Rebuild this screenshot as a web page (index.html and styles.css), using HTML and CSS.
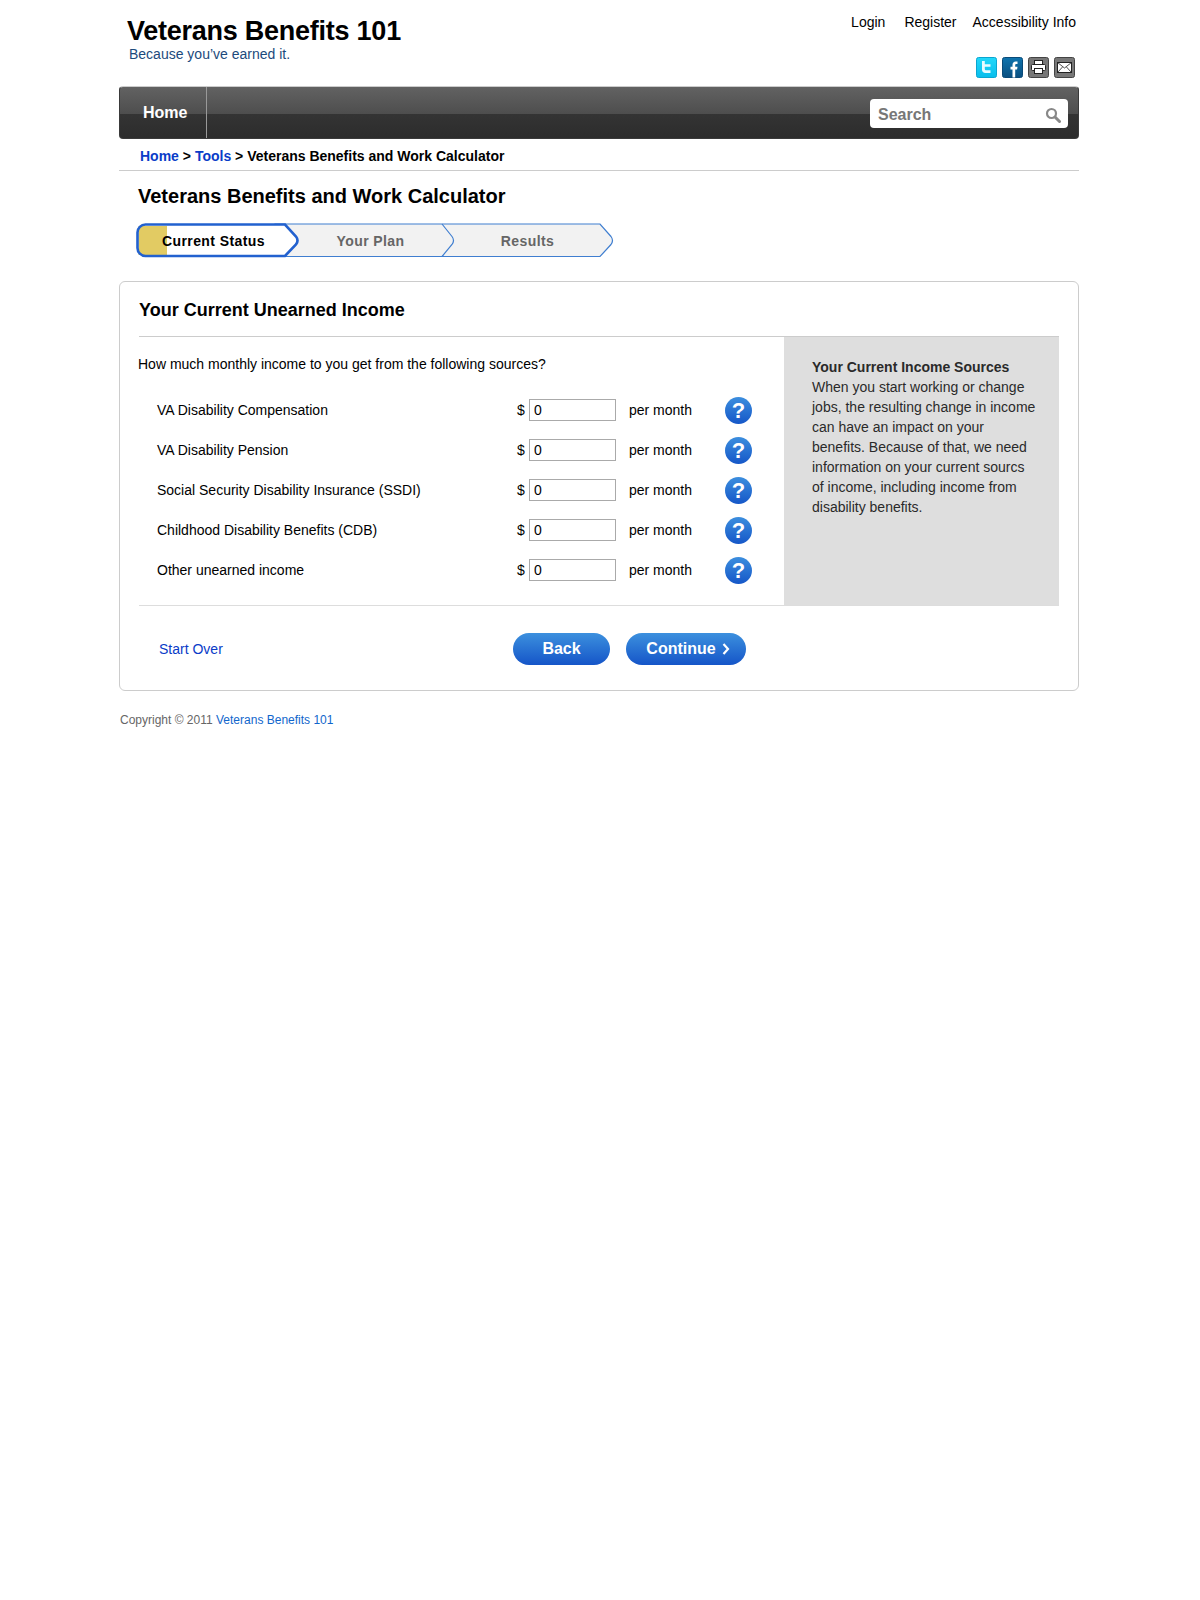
FILE: index.html
```html
<!DOCTYPE html>
<html lang="en">
<head>
    <meta charset="UTF-8">
    <title>Veterans Benefits and Work Calculator</title>
    <link rel="stylesheet" href="styles.css">
</head>
<body>

<div class="page">
    <header class="top">
        <div class="brand">
            <div class="brand-name">Veterans Benefits 101</div>
            <div class="brand-tag">Because you’ve earned it.</div>
        </div>
        <div class="top-right">
            <div class="top-links">
                <a href="#">Login</a>
                <a href="#">Register</a>
                <a href="#">Accessibility Info</a>
            </div>
            <div class="share">
                <svg class="share-icon" width="21" height="21" viewBox="0 0 21 21">
                    <defs>
                        <linearGradient id="tw" x1="0" y1="0" x2="0" y2="1">
                            <stop offset="0" stop-color="#22d8fa"/>
                            <stop offset="1" stop-color="#07bdec"/>
                        </linearGradient>
                        <linearGradient id="fb" x1="0" y1="0" x2="0" y2="1">
                            <stop offset="0" stop-color="#0f74ae"/>
                            <stop offset="1" stop-color="#0a4f80"/>
                        </linearGradient>
                    </defs>
                    <rect x="0.5" y="0.5" width="20" height="20" rx="2" fill="url(#tw)" stroke="#0aa5d0"/>
                    <path d="M6 4h2.800v3.200h5.700v2.600H8.800v1.900c0 1 .5 1.500 1.500 1.500h4.200v2.800h-5C7.200 16 6 14.800 6 12.800z" fill="#e8fbff"/>
                </svg>
                <svg class="share-icon" width="21" height="21" viewBox="0 0 21 21">
                    <rect x="0.5" y="0.5" width="20" height="20" rx="2" fill="url(#fb)" stroke="#0a4a78"/>
                    <path d="M10.500 20.500V12.500H8.500V9.800h2V8c0-2.300 1.200-3.500 3.300-3.500h1.700v2.600h-1.100c-.9 0-1.200.4-1.200 1.200v1.500h2.300l-.4 2.700h-1.900v8z" fill="#fff"/>
                </svg>
                <svg class="share-icon" width="21" height="21" viewBox="0 0 21 21">
                    <rect x="0.5" y="0.5" width="20" height="20" rx="2" fill="#777" stroke="#444"/>
                    <rect x="6.500" y="3.500" width="8" height="4" fill="#fff" stroke="#222"/>
                    <rect x="3.500" y="7.500" width="14" height="6" rx="1" fill="#fff" stroke="#222"/>
                    <rect x="6.500" y="11.500" width="8" height="5" fill="#fff" stroke="#222"/>
                </svg>
                <svg class="share-icon" width="21" height="21" viewBox="0 0 21 21">
                    <rect x="0.5" y="0.5" width="20" height="20" rx="2" fill="#777" stroke="#444"/>
                    <rect x="3.500" y="5.500" width="14" height="10" fill="#fff" stroke="#222"/>
                    <path d="M3.500 5.500l7 5.500 7-5.500M3.500 15.500l5-5.500M17.500 15.500l-5-5.500" fill="none" stroke="#222" stroke-width="0.8"/>
                </svg>
            </div>
        </div>
    </header>

    <nav class="navbar">
        <a class="nav-item" href="#">Home</a>
        <div class="search">
            <span>Search</span>
            <svg width="16" height="16" viewBox="0 0 16 16">
                <circle cx="6.500" cy="6.500" r="4.500" fill="none" stroke="#888" stroke-width="2.200"/>
                <path d="M10 10l4.500 4.500" stroke="#888" stroke-width="3" stroke-linecap="round"/>
            </svg>
        </div>
    </nav>

    <div class="breadcrumb">
        <a href="#">Home</a> &gt; <a href="#">Tools</a> &gt; Veterans Benefits and Work Calculator
    </div>

    <h1 class="page-title">Veterans Benefits and Work Calculator</h1>

    <!-- Steps -->
    <div class="steps">
        <svg class="steps-bg" width="480" height="36" viewBox="0 0 480 36">
            <path d="M140 1H465L476 13.500Q479 17.500 476 21.500L465 33.500H140z" fill="#f2f2f2" stroke="#3f7ed0" stroke-width="1.200"/>
            <path d="M307 1L317 13.500Q320 17.500 317 21.500L307 33.500" fill="none" stroke="#3f7ed0" stroke-width="1.200"/>
            <path d="M10.500 1.500H150L161 13.500Q164 17.500 161 21.500L150 33H10.500a8 8 0 0 1-8-8V9.500a8 8 0 0 1 8-8z" fill="#fff"/>
            <rect x="3.500" y="3" width="28.500" height="29" fill="#e2cb63"/>
            <path d="M10.500 1.500H150L161 13.500Q164 17.500 161 21.500L150 33H10.500a8 8 0 0 1-8-8V9.500a8 8 0 0 1 8-8z" fill="none" stroke="#2261cf" stroke-width="2.600"/>
        </svg>
        <div class="step step-current">Current Status</div>
        <div class="step">Your Plan</div>
        <div class="step">Results</div>
    </div>

    <div class="card">
        <h2 class="card-title">Your Current Unearned Income</h2>
        <div class="card-body">
            <div class="income">
                <p class="income-q">How much monthly income to you get from the following sources?</p>
                <div class="income-row">
                    <span class="income-name">VA Disability Compensation</span>
                    <span class="dollar">$</span>
                    <input class="income-input" type="text" value="0">
                    <span class="per">per month</span>
                    <span class="help">?</span>
                </div>
                <div class="income-row">
                    <span class="income-name">VA Disability Pension</span>
                    <span class="dollar">$</span>
                    <input class="income-input" type="text" value="0">
                    <span class="per">per month</span>
                    <span class="help">?</span>
                </div>
                <div class="income-row">
                    <span class="income-name">Social Security Disability Insurance (SSDI)</span>
                    <span class="dollar">$</span>
                    <input class="income-input" type="text" value="0">
                    <span class="per">per month</span>
                    <span class="help">?</span>
                </div>
                <div class="income-row">
                    <span class="income-name">Childhood Disability Benefits (CDB)</span>
                    <span class="dollar">$</span>
                    <input class="income-input" type="text" value="0">
                    <span class="per">per month</span>
                    <span class="help">?</span>
                </div>
                <div class="income-row">
                    <span class="income-name">Other unearned income</span>
                    <span class="dollar">$</span>
                    <input class="income-input" type="text" value="0">
                    <span class="per">per month</span>
                    <span class="help">?</span>
                </div>
            </div>
            <aside class="side">
                <strong>Your Current Income Sources</strong><br>
                When you start working or change jobs, the resulting change in income can have an impact on your benefits. Because of that, we need information on your current sourcs of income, including income from disability benefits.
            </aside>
        </div>
        <div class="card-actions">
            <a class="start-over" href="#">Start Over</a>
            <a class="btn btn-back" href="#">Back</a>
            <a class="btn btn-next" href="#">Continue
                <svg width="8" height="12" viewBox="0 0 8 12"><path d="M1.500 1l4.500 5-4.500 5" fill="none" stroke="#fff" stroke-width="2.200"/></svg>
            </a>
        </div>
    </div>

    <footer class="footer">Copyright © 2011 <a href="#">Veterans Benefits 101</a></footer>
</div>

</body>
</html>
```

FILE: styles.css
```css
body {
    font-family: "Liberation Sans", Arial, sans-serif;
    background-color: #fff;
    color: #000;
    margin: 0;
    padding: 0;
}
a {
    text-decoration: none;
}
.page {
    width: 960px;
    margin: 0 0 0 119px;
}

/* Header */
.top {
    display: flex;
    justify-content: space-between;
    height: 86px;
}
.brand {
    padding: 16px 0 0 8px;
}
.brand-name {
    font-size: 27px;
    line-height: 30px;
    font-weight: bold;
    letter-spacing: -0.25px;
}
.brand-tag {
    font-size: 14px;
    line-height: 16px;
    color: #1c4a7c;
    margin-left: 2px;
}
.top-right {
    display: flex;
    flex-direction: column;
    align-items: flex-end;
    padding-right: 3px;
}
.top-links {
    display: flex;
    gap: 16px;
    font-size: 14px;
    line-height: 16px;
    padding-top: 14px;
}
.top-links a {
    color: #000;
}
.top-links a:first-child {
    margin-right: 3px;
}
.share {
    display: flex;
    gap: 5px;
    margin-top: 27px;
    padding-right: 1px;
}
.share-icon {
    display: block;
}

/* Nav */
.navbar {
    height: 53px;
    box-sizing: border-box;
    display: flex;
    justify-content: space-between;
    align-items: center;
    border-radius: 4px;
    border: 1px solid #3a3a3a;
    border-top-color: #ccc;
    background: linear-gradient(to bottom, #626262 0%, #4e4e4e 52%, #343434 52%, #2c2c2c 100%);
}
.nav-item {
    align-self: stretch;
    width: 87px;
    padding-left: 23px;
    box-sizing: border-box;
    color: #fff;
    font-size: 16px;
    font-weight: bold;
    line-height: 51px;
    border-right: 1px solid #999;
}
.search {
    width: 198px;
    height: 29px;
    box-sizing: border-box;
    margin-right: 10px;
    margin-top: 2px;
    padding: 2px 7px 0 8px;
    background-color: #fff;
    border-radius: 4px;
    display: flex;
    justify-content: space-between;
    align-items: center;
    color: #777;
    font-size: 16px;
    font-weight: bold;
}

/* Breadcrumb */
.breadcrumb {
    height: 32px;
    box-sizing: border-box;
    padding: 9px 0 0 21px;
    font-size: 14px;
    line-height: 16px;
    font-weight: bold;
    border-bottom: 1px solid #ccc;
}
.breadcrumb a {
    color: #0a3cc8;
    font-weight: bold;
}
.page-title {
    font-size: 20px;
    line-height: 24px;
    margin: 13px 0 0 19px;
}

/* Steps */
.steps {
    position: relative;
    display: flex;
    width: 480px;
    height: 36px;
    margin: 15px 0 0 16px;
}
.steps-bg {
    position: absolute;
    left: 0;
    top: 0;
}
.step {
    position: relative;
    width: 157px;
    font-size: 14px;
    line-height: 36px;
    font-weight: bold;
    letter-spacing: 0.4px;
    color: #666;
    text-align: center;
}
.step-current {
    color: #000;
    box-sizing: border-box;
    text-align: left;
    padding-left: 27px;
}

/* Card */
.card {
    margin-top: 22px;
    height: 410px;
    box-sizing: border-box;
    padding: 0 19px;
    border: 1px solid #ccc;
    border-radius: 6px;
}
.card-title {
    font-size: 18px;
    line-height: 22px;
    margin: 0;
    padding: 17px 0 14px;
    border-bottom: 1px solid #ccc;
    height: 55px;
    box-sizing: border-box;
}
.card-body {
    display: flex;
    height: 269px;
    box-sizing: border-box;
    border-bottom: 1px solid #ddd;
}
.income {
    flex: 1;
    font-size: 14px;
    margin-left: -1px;
}
.income-q {
    margin: 0 0 18px;
    padding-top: 19px;
    line-height: 16px;
}
.income-row {
    display: flex;
    align-items: center;
    height: 40px;
    padding-left: 19px;
    line-height: 16px;
}
.income-name {
    width: 360px;
}
.dollar {
    width: 12px;
}
.income-input {
    width: 87px;
    height: 22px;
    box-sizing: border-box;
    padding: 0 4px;
    border: 1px solid #aaa;
    font-family: inherit;
    font-size: 14px;
    color: #000;
}
.per {
    width: 96px;
    margin-left: 13px;
}
.help {
    width: 27px;
    height: 27px;
    border-radius: 50%;
    background: linear-gradient(to bottom, #3c8ede, #1557c8);
    color: #fff;
    font-size: 22px;
    font-weight: bold;
    line-height: 27px;
    text-align: center;
}
.side {
    width: 275px;
    box-sizing: border-box;
    padding: 20px 20px 0 28px;
    background-color: #dedede;
    color: #2a2a2a;
    font-size: 14px;
    line-height: 20px;
}

/* Buttons */
.card-actions {
    display: flex;
    align-items: center;
    height: 85px;
    padding-left: 20px;
}
.start-over {
    width: 354px;
    color: #0a3cc8;
    font-size: 14px;
}
.btn {
    display: flex;
    justify-content: center;
    align-items: center;
    gap: 6px;
    height: 32px;
    border-radius: 16px;
    background: linear-gradient(to bottom, #3c90de, #1555c8);
    color: #fff;
    font-size: 16px;
    font-weight: bold;
}
.btn-back {
    width: 97px;
    margin-right: 16px;
}
.btn-next {
    width: 120px;
    box-sizing: border-box;
    padding-left: 4px;
}

.footer {
    margin-top: 21px;
    padding-left: 1px;
    font-size: 12px;
    line-height: 16px;
    color: #666;
}
.footer a {
    color: #1166cc;
}
```
